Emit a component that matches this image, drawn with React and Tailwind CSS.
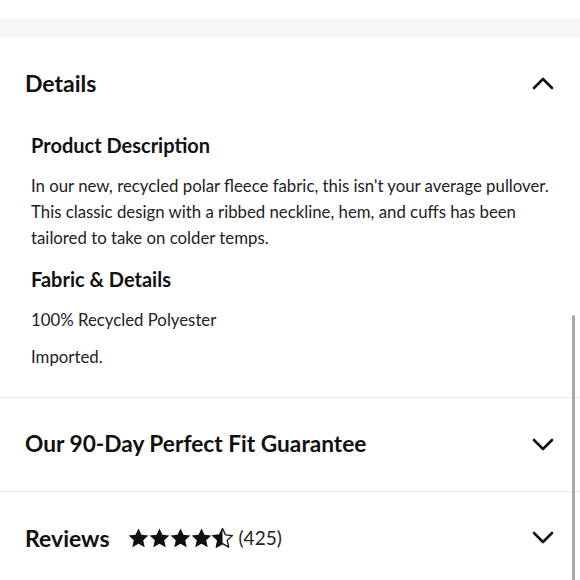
function Chevron({ up }) {
  return (
    <svg width="22" height="14" viewBox="0 0 22 14" fill="none" stroke="#111" strokeWidth="2.6" strokeLinecap="round" strokeLinejoin="round">
      {up ? <polyline points="2,12 11,3 20,12" /> : <polyline points="2,2 11,11 20,2" />}
    </svg>
  );
}

function Star({ half }) {
  const d = 'M12 0.6l3.4 7.2 7.9.9-5.9 5.4 1.7 7.8L12 17.9l-7.1 4 1.7-7.8-5.9-5.4 7.9-.9z';
  return (
    <svg width="21" height="21" viewBox="0 0 24 24">
      {half ? (
        <>
          <defs>
            <clipPath id="halfclip">
              <rect x="0" y="0" width="12" height="24" />
            </clipPath>
          </defs>
          <path d={d} fill="none" stroke="#111" strokeWidth="1.5" strokeLinejoin="round" />
          <path d={d} fill="#111" clipPath="url(#halfclip)" />
        </>
      ) : (
        <path d={d} fill="#111" />
      )}
    </svg>
  );
}

export default function App() {
  return (
    <div className="relative w-[580px] h-[580px] overflow-hidden bg-white text-[#111]" style={{ fontFamily: 'Lato, "Noto Sans", sans-serif' }}>
      <div className="h-[19px]" />
      <div className="h-[18px] bg-[#f6f6f6]" />

      <div className="flex items-center justify-between pl-[25px] pr-[26px] pt-[28px] pb-[24px]">
        <h2 className="text-[23px] font-bold leading-[36px]">Details</h2>
        <Chevron up />
      </div>

      <div className="pl-[31px] pr-[20px] text-[16.8px] text-[#222]">
        <h3 className="text-[20px] font-bold leading-[30px] mt-[5px] text-[#111]">Product Description</h3>
        <p className="leading-[26px] mt-[13px]">
          In our new, recycled polar fleece fabric, this isn't your average pullover. This classic design with a ribbed neckline, hem, and cuffs has been tailored to take on colder temps.
        </p>
        <h3 className="text-[20px] font-bold leading-[30px] mt-[13px] text-[#111]">Fabric &amp; Details</h3>
        <p className="leading-[26px] mt-[13px]">100% Recycled Polyester</p>
        <p className="leading-[26px] mt-[11px]">Imported.</p>
      </div>

      <div className="mt-[27px] border-t border-[#ececec]" />
      <div className="flex items-center justify-between pl-[25px] pr-[26px] h-[93px]">
        <h2 className="text-[22.7px] font-bold">Our 90-Day Perfect Fit Guarantee</h2>
        <Chevron />
      </div>
      <div className="border-t border-[#ececec]" />
      <div className="flex items-center justify-between pl-[25px] pr-[26px] h-[92px]">
        <div className="flex items-center">
          <h2 className="text-[23px] font-bold">Reviews</h2>
          <div className="flex items-center ml-[18px]">
            <Star />
            <Star />
            <Star />
            <Star />
            <Star half />
          </div>
          <span className="ml-[6px] text-[19px] text-[#222]">(425)</span>
        </div>
        <Chevron />
      </div>

      <div className="absolute right-[5px] top-[315px] w-[3px] h-[280px] rounded-full bg-[#a8a8a8]" />
    </div>
  );
}
